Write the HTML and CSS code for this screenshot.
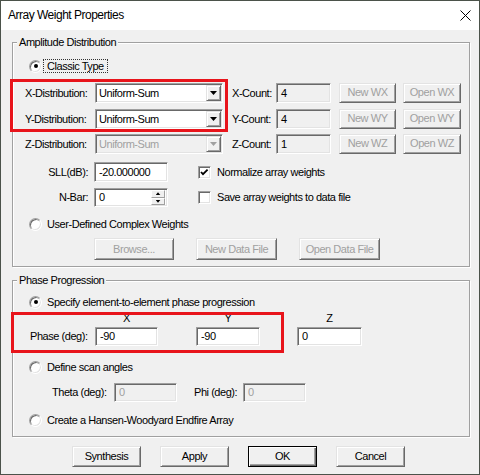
FILE: index.html
```html
<!DOCTYPE html>
<html>
<head>
<meta charset="utf-8">
<title>Array Weight Properties</title>
<link rel="stylesheet" href="styles.css">
</head>
<body>
<div class="window">
  <div class="titlebar">
    <span class="title">Array Weight Properties</span>
    <svg class="close" width="11" height="11" viewBox="0 0 11 11"><path d="M0.5 0.5 L10.5 10.5 M10.5 0.5 L0.5 10.5" stroke="#000" stroke-width="1" fill="none"/></svg>
  </div>
  <div class="client">
    <div class="group amp">
      <span class="legend">Amplitude Distribution</span>
      <div class="row radio-row"><span class="radio on"></span><span class="rlabel focus">Classic Type</span></div>

      <div class="row drow r-x">
        <span class="lbl">X-Distribution:</span>
        <div class="combo"><span class="ctext">Uniform-Sum</span><span class="cbtn"><span class="tri"></span></span></div>
        <span class="lbl2">X-Count:</span>
        <div class="edit ro">4</div>
        <div class="btn dis wnew">New WX</div>
        <div class="btn dis wopen">Open WX</div>
      </div>
      <div class="row drow r-y">
        <span class="lbl">Y-Distribution:</span>
        <div class="combo"><span class="ctext">Uniform-Sum</span><span class="cbtn"><span class="tri"></span></span></div>
        <span class="lbl2">Y-Count:</span>
        <div class="edit ro">4</div>
        <div class="btn dis wnew">New WY</div>
        <div class="btn dis wopen">Open WY</div>
      </div>
      <div class="row drow r-z">
        <span class="lbl">Z-Distribution:</span>
        <div class="combo disabled"><span class="ctext">Uniform-Sum</span><span class="cbtn"><span class="tri"></span></span></div>
        <span class="lbl2">Z-Count:</span>
        <div class="edit ro">1</div>
        <div class="btn dis wnew">New WZ</div>
        <div class="btn dis wopen">Open WZ</div>
      </div>

      <div class="row srow r-sll">
        <span class="slbl">SLL(dB):</span>
        <div class="edit wide">-20.000000</div>
        <span class="check on"><svg width="9" height="9" viewBox="0 0 9 9"><polyline points="1,4 3,6.2 7.6,1.6" fill="none" stroke="#000" stroke-width="1.8"/></svg></span>
        <span class="clabel">Normalize array weights</span>
      </div>
      <div class="row srow r-nbar">
        <span class="slbl">N-Bar:</span>
        <div class="edit wide spin"><span class="stext">0</span><span class="spinbox"><span class="sbtn"><span class="stri up"></span></span><span class="sbtn"><span class="stri"></span></span></span></div>
        <span class="check"></span>
        <span class="clabel">Save array weights to data file</span>
      </div>

      <div class="row radio-row r-user"><span class="radio"></span><span class="rlabel">User-Defined Complex Weights</span></div>
      <div class="row brow">
        <div class="btn dis b-browse">Browse...</div>
        <div class="btn dis b-new">New Data File</div>
        <div class="btn dis b-open">Open Data File</div>
      </div>
    </div>

    <div class="group phase">
      <span class="legend">Phase Progression</span>
      <div class="row radio-row"><span class="radio on"></span><span class="rlabel">Specify element-to-element phase progression</span></div>
      <div class="pgrid">
        <span class="hd c2">X</span>
        <span class="hd c4">Y</span>
        <span class="hd c6">Z</span>
        <span class="plbl">Phase (deg):</span>
        <div class="edit">-90</div>
        <span class="sp"></span>
        <div class="edit">-90</div>
        <span class="sp"></span>
        <div class="edit">0</div>
      </div>
      <div class="row radio-row r-scan"><span class="radio"></span><span class="rlabel">Define scan angles</span></div>
      <div class="row trow">
        <span class="tlbl">Theta (deg):</span>
        <div class="edit dis">0</div>
        <span class="tlbl2">Phi (deg):</span>
        <div class="edit dis">0</div>
      </div>
      <div class="row radio-row r-hansen"><span class="radio"></span><span class="rlabel">Create a Hansen-Woodyard Endfire Array</span></div>
    </div>

    <div class="row footer">
      <div class="btn">Synthesis</div>
      <div class="btn">Apply</div>
      <div class="btn default">OK</div>
      <div class="btn">Cancel</div>
    </div>
  </div>
  <div class="annot a1"></div>
  <div class="annot a2"></div>
</div>
</body>
</html>
```
FILE: styles.css
```css
* { box-sizing: border-box; }
html, body { margin: 0; padding: 0; }
body {
  width: 480px;
  height: 475px;
  overflow: hidden;
  font: 11px/13px "Liberation Sans", Arial, sans-serif;
  letter-spacing: -0.45px;
  color: #000;
  background: #f0f0f0;
}
.window {
  position: relative;
  width: 480px;
  height: 475px;
  border: 1px solid #4b524a;
  background: #f0f0f0;
  display: flex;
  flex-direction: column;
}
.titlebar {
  height: 29px;
  flex: none;
  background: #fff;
  display: flex;
  align-items: center;
  justify-content: space-between;
  padding: 0 8px 0 7px;
}
.title { font-size: 12px; letter-spacing: -0.5px; }
.close { margin-bottom: 1px; }

.client {
  flex: 1;
  padding: 12px 9px 0 11px;
  display: flex;
  flex-direction: column;
}
.group {
  position: relative;
  border: 1px solid #a0a0a0;
  box-shadow: inset 1px 1px 0 #fff, 1px 1px 0 #fff;
}
.group.amp { padding: 16px 0 6px 0; }
.group.phase { margin-top: 13px; padding: 14px 0 9px 0; }
.legend {
  position: absolute;
  left: 4px;
  top: -7px;
  padding: 0 2px;
  background: #f0f0f0;
  line-height: 13px;
}
.row { display: flex; align-items: center; }

/* radios */
.radio-row { height: 14px; padding-left: 16px; }
.radio {
  width: 13px;
  height: 13px;
  flex: none;
  border-radius: 50%;
  background: #fff;
  border: 1px solid;
  border-color: #a0a0a0 #fff #fff #a0a0a0;
  box-shadow: inset 1px 1px 0 #696969, inset -1px -1px 0 #e3e3e3;
  display: flex;
  align-items: center;
  justify-content: center;
}
.radio.on::after {
  content: "";
  width: 4px;
  height: 4px;
  border-radius: 50%;
  background: #000;
}
.rlabel {
  margin-left: 1px;
  padding: 0 3px;
  border: 1px solid transparent;
  line-height: 12px;
  white-space: nowrap;
}
.rlabel.focus { border: 1px dotted #333; }
.r-user { margin-top: 10px; }
.r-scan { margin-top: 14px; }
.r-hansen { margin-top: 11px; }

/* edits */
.edit {
  height: 19px;
  background: #fff;
  border: 1px solid;
  border-color: #a0a0a0 #fff #fff #a0a0a0;
  box-shadow: inset 1px 1px 0 #696969, inset -1px -1px 0 #e3e3e3;
  padding-left: 4px;
  display: flex;
  align-items: center;
  white-space: nowrap;
}
.edit.ro { background: #f0f0f0; }
.edit.dis { background: #f0f0f0; color: #a0a0a0; }

/* distribution rows */
.drow { height: 20px; padding-left: 12px; }
.drow .lbl { width: 70px; flex: none; }
.r-x { margin-top: 10px; }
.r-y { margin-top: 6px; }
.r-z { margin-top: 5px; }
.combo {
  width: 128px;
  height: 20px;
  flex: none;
  background: #fff;
  border: 1px solid;
  border-color: #a0a0a0 #fff #fff #a0a0a0;
  box-shadow: inset 1px 1px 0 #696969, inset -1px -1px 0 #e3e3e3;
  padding: 1px 1px 1px 3px;
  display: flex;
  align-items: center;
}
.combo.disabled { background: #f0f0f0; color: #a0a0a0; }
.ctext { flex: 1; }
.cbtn {
  width: 15px;
  height: 16px;
  flex: none;
  background: #f0f0f0;
  border: 1px solid;
  border-color: #e3e3e3 #696969 #696969 #e3e3e3;
  box-shadow: inset 1px 1px 0 #fff, inset -1px -1px 0 #a0a0a0;
  display: flex;
  align-items: center;
  justify-content: center;
}
.tri {
  width: 7px;
  height: 4px;
  background: #000;
  clip-path: polygon(0 0, 100% 0, 50% 100%);
}
.combo.disabled .tri { background: #a0a0a0; }
.drow .lbl2 { width: 44px; margin-left: 9px; flex: none; }
.drow .edit { width: 55px; height: 20px; flex: none; }
.btn {
  display: flex;
  align-items: center;
  justify-content: center;
  flex: none;
  background: #f0f0f0;
  border: 1px solid;
  border-color: #e3e3e3 #696969 #696969 #e3e3e3;
  box-shadow: inset 1px 1px 0 #fff, inset -1px -1px 0 #a0a0a0;
  white-space: nowrap;
}
.btn.dis { color: #a0a0a0; }
.btn.wnew { width: 57px; height: 20px; margin-left: 8px; margin-top: -1px; }
.btn.wopen { width: 58px; height: 20px; margin-left: 7px; margin-top: -1px; }

/* sll / nbar */
.srow { padding-left: 12px; }
.r-sll { height: 20px; margin-top: 8px; }
.r-nbar { height: 19px; margin-top: 6px; }
.slbl { width: 69px; flex: none; text-align: right; padding-right: 6px; }
.edit.wide { width: 74px; height: 100%; flex: none; }
.edit.spin { padding-right: 2px; }
.stext { flex: 1; }
.spinbox { display: flex; flex-direction: column; width: 14px; height: 15px; }
.sbtn {
  flex: 1;
  background: #f0f0f0;
  border: 1px solid;
  border-color: #fff #a0a0a0 #a0a0a0 #fff;
  display: flex;
  align-items: center;
  justify-content: center;
}
.stri {
  width: 5px;
  height: 3px;
  background: #000;
  clip-path: polygon(0 0, 100% 0, 50% 100%);
}
.stri.up { clip-path: polygon(50% 0, 100% 100%, 0 100%); }
.check {
  width: 13px;
  height: 13px;
  flex: none;
  margin-left: 30px;
  background: #fff;
  border: 1px solid;
  border-color: #a0a0a0 #fff #fff #a0a0a0;
  box-shadow: inset 1px 1px 0 #696969, inset -1px -1px 0 #e3e3e3;
  display: flex;
  align-items: center;
  justify-content: center;
}
.clabel { margin-left: 6px; white-space: nowrap; }

/* buttons row in amplitude */
.brow { height: 22px; margin-top: 7px; padding-left: 81px; gap: 22px; }
.brow .btn { height: 22px; }
.b-browse { width: 80px; }
.b-new, .b-open { width: 81px; }

/* phase grid */
.pgrid {
  display: grid;
  grid-template-columns: 65px 63px 38px 64px 37px 65px;
  grid-template-rows: 13px 19px;
  row-gap: 2px;
  padding-left: 17px;
  margin-top: 3px;
  align-items: center;
}
.pgrid > * { grid-row: 2; }
.pgrid > .hd { grid-row: 1; text-align: center; }
.hd.c2 { grid-column: 2; }
.hd.c4 { grid-column: 4; }
.hd.c6 { grid-column: 6; }
.plbl { white-space: nowrap; grid-column: 1; }
.pgrid .edit { height: 19px; }

/* theta row */
.trow { height: 19px; margin-top: 9px; padding-left: 39px; }
.tlbl { width: 62px; flex: none; }
.tlbl2 { width: 49px; margin-left: 17px; flex: none; }
.trow .edit { width: 63px; height: 19px; flex: none; }

/* footer */
.footer { margin-top: 9px; padding-left: 60px; gap: 19px; }
.footer .btn { width: 69px; height: 21px; }
.btn.default {
  border: 1px solid #000;
  box-shadow: inset 1px 1px 0 #fff, inset -1px -1px 0 #696969, inset -2px -2px 0 #a0a0a0;
}

/* red annotation rectangles */
.annot {
  position: absolute;
  border: 3px solid #e8141b;
  pointer-events: none;
}
.a1 { left: 9px; top: 78px; width: 218px; height: 53px; }
.a2 { left: 10px; top: 311px; width: 273px; height: 41px; }
```
